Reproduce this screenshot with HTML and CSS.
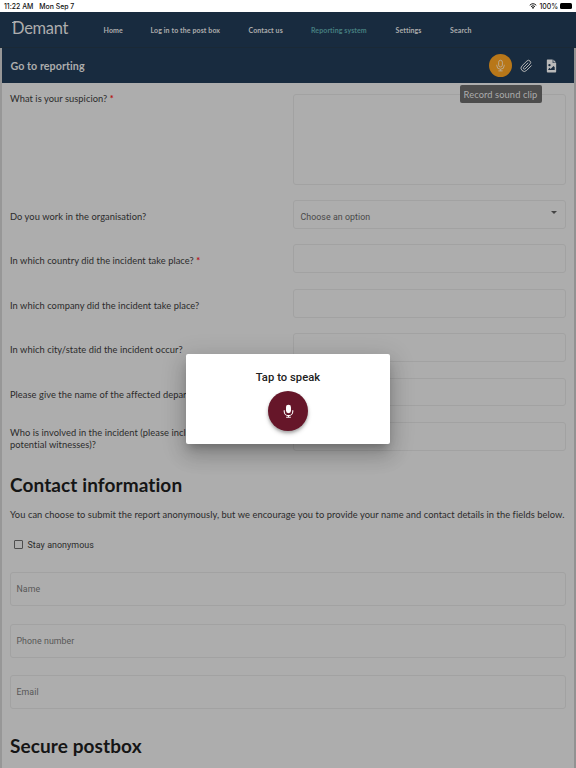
FILE: index.html
```html
<!DOCTYPE html>
<html lang="en">

<head>
    <meta charset="UTF-8">
    <meta name="viewport" content="width=device-width, initial-scale=1.0">
    <title>Demant - Go to reporting</title>
    <link rel="stylesheet" href="styles.css">
</head>

<body>
    <div class="status-bar">
        <span>11:22 AM</span>
        <span class="date">Mon Sep 7</span>
        <svg class="wifi" viewBox="0 0 16 12">
            <path d="M1.5 4.5a9.5 9.5 0 0 1 13 0M4 7.2a6 6 0 0 1 8 0" fill="none" stroke="#111" stroke-width="2"/>
            <path d="M5.6 9.2a3.6 3.6 0 0 1 4.8 0L8 11.8z" fill="#111"/>
        </svg>
        <span>100%</span>
        <span class="battery"></span>
    </div>

    <nav class="navbar">
        <span class="logo">Demant</span>
        <a class="nav-home">Home</a>
        <a class="nav-login">Log in to the post box</a>
        <a class="nav-contact">Contact us</a>
        <a class="nav-report active">Reporting system</a>
        <a class="nav-settings">Settings</a>
        <a class="nav-search">Search</a>
    </nav>

    <main class="page">
        <header class="toolbar">
            <h2>Go to reporting</h2>
            <button class="tool record" type="button" aria-label="Record sound clip">
                <svg viewBox="0 0 12 16">
                    <rect x="3.5" y="1" width="5" height="9" rx="2.5"/>
                    <path d="M1 7v1a5 5 0 0 0 10 0V7M6 13v2M3.2 15.2h5.6"/>
                </svg>
                <span class="tooltip">Record sound clip</span>
            </button>
            <button class="tool clip" type="button" aria-label="Attach file">
                <svg viewBox="0 0 24 24">
                    <path d="M21.4 11 12.2 20.2a6 6 0 0 1-8.5-8.5l9.2-9.1a4 4 0 0 1 5.7 5.6l-9.2 9.2a2 2 0 0 1-2.8-2.8l8.5-8.5"/>
                </svg>
            </button>
            <button class="tool file" type="button" aria-label="Attach image">
                <svg viewBox="0 0 18 24">
                    <path fill-rule="evenodd" d="M2 1h9v6h6v14.5a1.5 1.5 0 0 1-1.5 1.5h-13A1.5 1.5 0 0 1 1 21.5V2a1 1 0 0 1 1-1zM5.5 8.5a2 2 0 1 0 0 4 2 2 0 0 0 0-4zM3.5 19h11v-5l-2-2-5 5-1.8-1.8-2.2 2.2z"/>
                    <path d="M12.2 1v4.8H17z"/>
                </svg>
            </button>
        </header>

        <form class="report">
            <div class="row row-tall">
                <label>What is your suspicion? <b>*</b></label>
                <div class="field"></div>
            </div>
            <div class="row">
                <label>Do you work in the organisation?</label>
                <div class="field select">Choose an option</div>
            </div>
            <div class="row">
                <label>In which country did the incident take place? <b>*</b></label>
                <div class="field"></div>
            </div>
            <div class="row">
                <label>In which company did the incident take place?</label>
                <div class="field"></div>
            </div>
            <div class="row">
                <label>In which city/state did the incident occur?</label>
                <div class="field"></div>
            </div>
            <div class="row">
                <label>Please give the name of the affected department</label>
                <div class="field"></div>
            </div>
            <div class="row">
                <label>Who is involved in the incident (please include potential witnesses)?</label>
                <div class="field"></div>
            </div>

            <h1>Contact information</h1>
            <p>You can choose to submit the report anonymously, but we encourage you to provide your name and contact details in the fields below.</p>
            <label class="check"><span class="box"></span>Stay anonymous</label>
            <div class="input">Name</div>
            <div class="input">Phone number</div>
            <div class="input">Email</div>
            <h1 class="postbox">Secure postbox</h1>
        </form>
    </main>

    <div class="dialog">
        <div class="dialog-title">Tap to speak</div>
        <button class="speak" type="button" aria-label="Speak">
            <svg viewBox="0 0 14 18">
                <rect x="3.8" y="1" width="6.4" height="11" rx="3.2" fill="#fff"/>
                <path d="M1.5 8v1.5a5.5 5.5 0 0 0 11 0V8M7 15v2M4 17h6" fill="none" stroke="#fff" stroke-width="1.4"/>
            </svg>
        </button>
    </div>
</body>

</html>
```
FILE: styles.css
```css
* {
    box-sizing: border-box;
}

body {
    margin: 0;
    height: 768px;
    overflow: hidden;
    position: relative;
    background: #adadad;
    color: #2b2b2b;
    font-family: Lato, sans-serif;
    font-size: 9.3px;
    font-variant-ligatures: none;
    letter-spacing: 0.06px;
}

button {
    border: none;
    padding: 0;
    font: inherit;
}

.status-bar {
    display: flex;
    align-items: center;
    height: 12px;
    padding: 0 4px;
    background: #fff;
    color: #111;
    font-family: Inter, sans-serif;
    font-size: 6.9px;
    font-weight: 500;
    letter-spacing: 0;
}

.date {
    margin-left: 6px;
}

.wifi {
    width: 8px;
    height: 6px;
    margin: 0 2px 0 auto;
}

.battery {
    width: 12px;
    height: 6px;
    margin-left: 2px;
    border-radius: 1.5px;
    background: #000;
}

.navbar {
    display: flex;
    align-items: center;
    height: 36px;
    padding-left: 12px;
    background: #182b3f;
    color: #adadad;
    border-bottom: 1px solid #1a2936;
    font-size: 7px;
    font-weight: bold;
    letter-spacing: 0.1px;
    white-space: nowrap;
}

.logo {
    position: relative;
    width: 91.5px;
    padding-bottom: 3px;
    font-size: 16.5px;
    font-weight: normal;
    letter-spacing: -0.3px;
}

/* small spur on the top left of the D */
.logo::before {
    content: "";
    position: absolute;
    left: 0;
    top: 4px;
    width: 4px;
    height: 1px;
    background: #adadad;
}

.nav-home {
    width: 47px;
}

.nav-login {
    width: 98px;
}

.nav-contact {
    width: 62.5px;
}

.nav-report {
    width: 84.5px;
}

.nav-settings {
    width: 54.5px;
}

.active {
    color: #467f80;
}

.page {
    height: 720px;
    border-left: 2px solid #979797;
    border-right: 2px solid #929292;
}

.toolbar {
    display: flex;
    align-items: center;
    height: 35px;
    padding: 0 10px 0 8.5px;
    background: #182b3f;
    color: #adadad;
}

.toolbar h2 {
    margin: 0 auto 0 0;
    font-size: 10.7px;
}

.tool {
    display: flex;
    align-items: center;
    justify-content: center;
    width: 25px;
    height: 23px;
    background: none;
}

.tool svg {
    fill: none;
    stroke: #b5b5b5;
    stroke-width: 1.8;
    width: 13px;
    height: 14px;
}

.record {
    position: relative;
    z-index: 1;
    width: 23px;
    border-radius: 50%;
    background: #b87719;
}

.record svg {
    width: 9px;
    height: 13px;
    stroke-width: 1.2;
    stroke: #bcae99;
}

.clip {
    margin-left: 2px;
}

.file svg {
    width: 11px;
    height: 14px;
    fill: #b9b9b9;
    stroke: none;
}

.tooltip {
    position: absolute;
    top: 31px;
    left: 50%;
    transform: translateX(-50%);
    width: 82px;
    height: 18px;
    line-height: 19px;
    border-radius: 2px;
    background: #4d4d4d;
    color: #acacac;
    font-size: 9.3px;
    letter-spacing: 0.1px;
    white-space: nowrap;
}

.report {
    padding: 11px 8px 0;
}

.row {
    display: flex;
    align-items: center;
    justify-content: space-between;
    height: 28.8px;
    margin-bottom: 15.6px;
}

.row label {
    width: 215px;
    padding-top: 5px;
    line-height: 12px;
}

.row b {
    color: #b80f12;
}

.row-tall {
    align-items: flex-start;
    height: 90.5px;
}

.row-tall label {
    padding-top: 0;
    margin-top: -1.4px;
}

.field {
    position: relative;
    width: 273px;
    height: 100%;
    border: 1px solid #a2a2a2;
    border-radius: 3px;
}

.select {
    padding: 11px 6.5px 0;
    color: #484848;
    font-family: Roboto, sans-serif;
    font-size: 8.8px;
}

.select::after {
    content: "";
    position: absolute;
    right: 8px;
    top: 10px;
    border: 3px solid transparent;
    border-top-color: #444;
    border-bottom: none;
}

h1 {
    margin: 22.5px 0 0;
    color: #151515;
    font-size: 19px;
    line-height: 24px;
    letter-spacing: 0.1px;
}

.report p {
    margin: 12px 0 17.5px;
    line-height: 12px;
    letter-spacing: 0.065px;
    white-space: nowrap;
}

.check {
    display: flex;
    align-items: center;
    height: 12px;
    padding-left: 4px;
    margin-bottom: 21px;
    font-family: Roboto, sans-serif;
    font-size: 8.9px;
}

.box {
    width: 9px;
    height: 9px;
    margin-right: 4.5px;
    border: 1px solid #4e4e4e;
    border-radius: 1px;
}

.input {
    display: flex;
    align-items: center;
    height: 34px;
    margin-bottom: 17.7px;
    padding: 0 5.5px;
    border: 1px solid #a2a2a2;
    border-radius: 3px;
    color: #575757;
    font-family: Roboto, sans-serif;
    font-size: 8.8px;
}

.postbox {
    margin-top: 24.5px;
}

.dialog {
    position: absolute;
    z-index: 2;
    left: 186px;
    top: 354px;
    width: 204px;
    height: 90px;
    display: flex;
    flex-direction: column;
    align-items: center;
    padding-top: 16px;
    border-radius: 2px;
    background: #fff;
    box-shadow: 0 6px 8px -3px rgba(0, 0, 0, .2), 0 12px 19px 1px rgba(0, 0, 0, .14), 0 5px 23px 4px rgba(0, 0, 0, .12);
}

.dialog-title {
    color: #212121;
    font-family: Roboto, sans-serif;
    font-size: 11.2px;
    font-weight: 500;
    line-height: 15px;
}

.speak {
    display: flex;
    align-items: center;
    justify-content: center;
    width: 40px;
    height: 40px;
    margin-top: 6px;
    border-radius: 50%;
    background: #661629;
    box-shadow: 0 2px 3px rgba(0, 0, 0, .25), 0 3px 5px rgba(0, 0, 0, .14);
}

.speak svg {
    width: 11px;
    height: 14px;
}
```
